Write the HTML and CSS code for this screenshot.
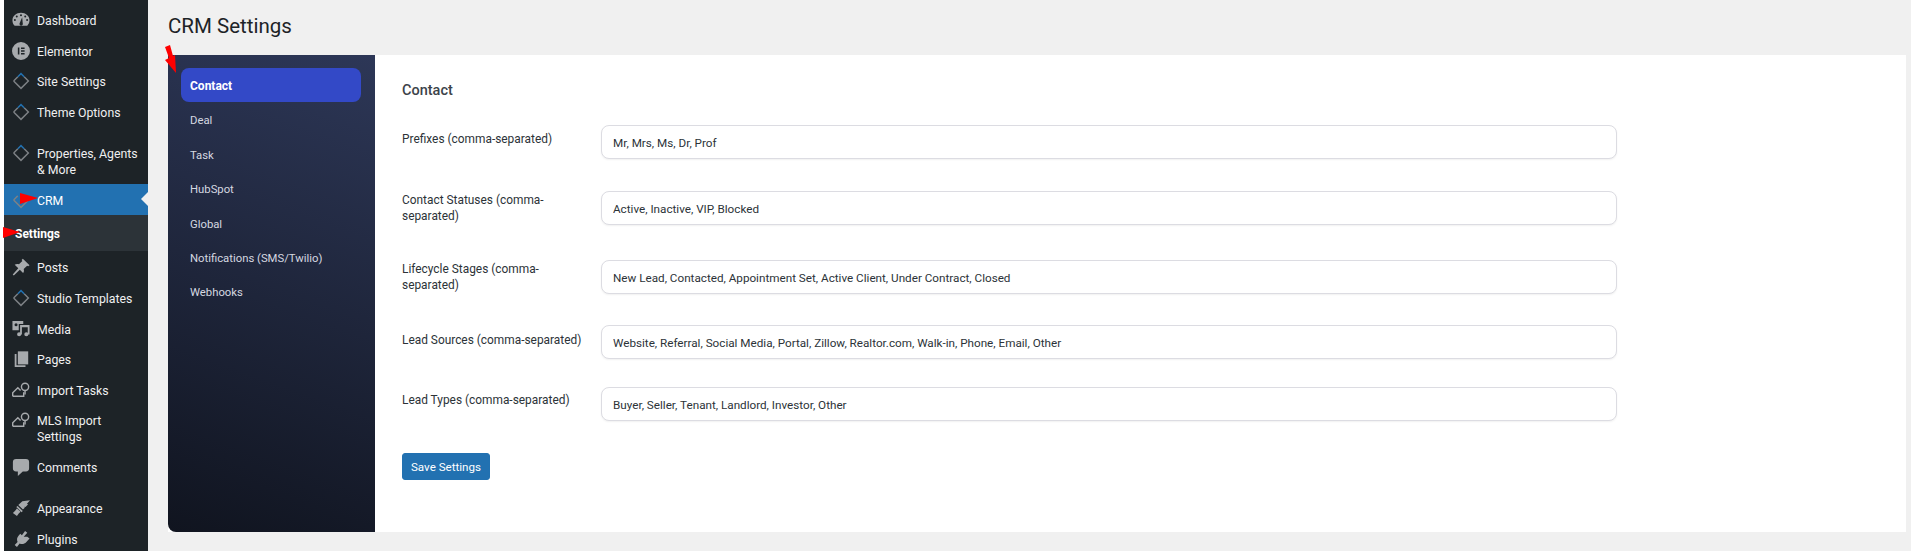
FILE: index.html
```html
<!DOCTYPE html>
<html lang="en">
<head>
<meta charset="utf-8">
<title>CRM Settings</title>
<link rel="stylesheet" href="styles.css">
</head>
<body>
<svg class="defs" width="0" height="0" aria-hidden="true">
  <symbol id="i-dash" viewBox="0 0 20 20"><path fill-rule="evenodd" d="M3 16.500h14A8.600 8.600 0 0 0 19.500 10.500C19.500 5.500 15.200 2 10 2S.5 5.500.5 10.500c0 2.300.9 4.400 2.500 6zM10 3.500a1.100 1.100 0 1 1 0 2.200 1.100 1.100 0 0 1 0-2.200zM5.300 5a1.100 1.100 0 1 1 0 2.200 1.100 1.100 0 0 1 0-2.200zM14.700 5a1.100 1.100 0 1 1 0 2.200 1.100 1.100 0 0 1 0-2.200zM3.200 9a1.100 1.100 0 1 1 0 2.200 1.100 1.100 0 0 1 0-2.200zM16.800 9a1.100 1.100 0 1 1 0 2.200 1.100 1.100 0 0 1 0-2.200zM11.300 7l.6 6.400a1.900 1.900 0 1 1-3.200-.3z"/></symbol>
  <symbol id="i-elementor" viewBox="0 0 20 20"><path fill-rule="evenodd" d="M10 0a10 10 0 1 0 0 20 10 10 0 0 0 0-20zM6.500 6h1.700v8H6.500zM10 6h4v1.700h-4zM10 9.150h4v1.700h-4zM10 12.300h4V14h-4z"/></symbol>
  <symbol id="i-diamond" viewBox="0 0 20 20"><path class="d-low" d="M1.800 10 10 18.200 18.200 10 13.500 5.300M6.500 5.300 1.800 10" fill="none" stroke-width="1.600"/><path class="d-high" d="M6.500 5.300 10 1.800 13.500 5.300" fill="none" stroke-width="1.600"/></symbol>
  <symbol id="i-pin" viewBox="0 0 20 20"><path d="M12 .8 19.500 8l-1.500 1.300-1.200-.8-3.800 3.600c.6 1.700.3 3.300-.7 4.600L8.700 13 2 19.500l-1.200-1.100L7 11.400 3 7.600c1.300-1.100 3-1.300 4.700-.7l3.800-3.700-.8-1.100z"/></symbol>
  <symbol id="i-media" viewBox="0 0 20 20"><path fill-rule="evenodd" d="M.5 1h12v3.500H7.500V11.500H.5zM4.500 3.500a1.700 1.700 0 1 0 0 3.400 1.700 1.700 0 0 0 0-3.400z"/><path fill-rule="evenodd" d="M9 5.500h10.500V16h-2V8h-6.500v8H9z"/><path d="M8 13.500a2.300 2.300 0 1 1-.1 4.600 2.300 2.300 0 0 1 .1-4.600zM16 13.500a2.300 2.300 0 1 1-.1 4.600 2.300 2.300 0 0 1 .1-4.600z"/></symbol>
  <symbol id="i-pages" viewBox="0 0 20 20"><path d="M6.500 1.500h11.500v14.500H6.500z"/><path d="M3 4.500h2v12.500h10V19H3z"/></symbol>
  <symbol id="i-import" viewBox="0 0 20 20"><path fill="none" stroke-width="1.600" d="M.8 17v-4L6.500 7.500 9.500 10.500M.8 17h12.200V12.500"/><circle fill="none" stroke-width="1.600" cx="14.500" cy="6.500" r="4"/><path fill="none" stroke-width="1.600" d="M14.500 10.500V15"/></symbol>
  <symbol id="i-comment" viewBox="0 0 20 20"><path d="M4.500 1h11A3.500 3.500 0 0 1 19 4.500v7a3.500 3.500 0 0 1-3.500 3.500H12l-5.500 5v-5h-2A3.500 3.500 0 0 1 1 11.500v-7A3.500 3.500 0 0 1 4.500 1z"/></symbol>
  <symbol id="i-brush" viewBox="0 0 20 20"><path d="M11.500 2.500 20 1.500 16.500 5.500l1.500.3-3 3-1.200-.3.400 1.100-2 2L7 6.800z"/><path d="M6.200 7.700 12 13.300 10.600 14.700 4.800 9z"/><path d="M5.500 10.500 9.500 14.300 7.500 16 5.500 19 1 15.500 3.500 13z"/></symbol>
  <symbol id="i-plug" viewBox="0 0 20 20"><path d="M14.500 1 17 3 13 7.500h4l2.500 2-3.500 3.800c-2.300 2.500-5.200 2.900-7.500 1.700L5.500 19 3 16.800l3.200-3.600C5.100 10.900 5.400 8.200 7.700 5.800L9.200 4.200l1.800 1.600z"/></symbol>
</svg>

<nav class="sidebar">
  <ul class="menu">
    <li class="menu-item"><svg class="icon"><use href="#i-dash"/></svg><span>Dashboard</span></li>
    <li class="menu-item"><svg class="icon"><use href="#i-elementor"/></svg><span>Elementor</span></li>
    <li class="menu-item"><svg class="icon"><use href="#i-diamond"/></svg><span>Site Settings</span></li>
    <li class="menu-item"><svg class="icon"><use href="#i-diamond"/></svg><span>Theme Options</span></li>
    <li class="menu-item menu-item-sep"><svg class="icon"><use href="#i-diamond"/></svg><span>Properties, Agents &amp; More</span></li>
    <li class="menu-item menu-item-current"><svg class="icon"><use href="#i-diamond"/></svg><span>CRM</span></li>
    <li class="submenu">Settings</li>
    <li class="menu-item"><svg class="icon"><use href="#i-pin"/></svg><span>Posts</span></li>
    <li class="menu-item"><svg class="icon"><use href="#i-diamond"/></svg><span>Studio Templates</span></li>
    <li class="menu-item"><svg class="icon"><use href="#i-media"/></svg><span>Media</span></li>
    <li class="menu-item"><svg class="icon"><use href="#i-pages"/></svg><span>Pages</span></li>
    <li class="menu-item"><svg class="icon"><use href="#i-import"/></svg><span>Import Tasks</span></li>
    <li class="menu-item"><svg class="icon"><use href="#i-import"/></svg><span>MLS Import Settings</span></li>
    <li class="menu-item"><svg class="icon"><use href="#i-comment"/></svg><span>Comments</span></li>
    <li class="menu-item menu-item-sep"><svg class="icon"><use href="#i-brush"/></svg><span>Appearance</span></li>
    <li class="menu-item"><svg class="icon"><use href="#i-plug"/></svg><span>Plugins</span></li>
  </ul>
</nav>

<main class="main">
  <h1 class="page-title">CRM Settings</h1>
  <section class="panel">
    <aside class="tabs">
      <a class="tab tab-active">Contact</a>
      <a class="tab">Deal</a>
      <a class="tab">Task</a>
      <a class="tab">HubSpot</a>
      <a class="tab">Global</a>
      <a class="tab">Notifications (SMS/Twilio)</a>
      <a class="tab">Webhooks</a>
    </aside>
    <form class="content">
      <h2 class="content-title">Contact</h2>
      <div class="field field-a"><label class="field-label">Prefixes (comma-separated)</label><input class="field-input" value="Mr, Mrs, Ms, Dr, Prof"></div>
      <div class="field field-b"><label class="field-label">Contact Statuses (comma-separated)</label><input class="field-input" value="Active, Inactive, VIP, Blocked"></div>
      <div class="field field-c"><label class="field-label">Lifecycle Stages (comma-separated)</label><input class="field-input" value="New Lead, Contacted, Appointment Set, Active Client, Under Contract, Closed"></div>
      <div class="field field-d"><label class="field-label">Lead Sources (comma-separated)</label><input class="field-input" value="Website, Referral, Social Media, Portal, Zillow, Realtor.com, Walk-in, Phone, Email, Other"></div>
      <div class="field field-e"><label class="field-label">Lead Types (comma-separated)</label><input class="field-input" value="Buyer, Seller, Tenant, Landlord, Investor, Other"></div>
      <button class="save" type="button">Save Settings</button>
    </form>
  </section>
</main>

<svg class="annotation" width="1911" height="551" aria-hidden="true">
  <path d="M165 47 170 45 173 56 175 55 176 73 165 60 169 58z"/>
  <path d="M20 193 38 198 20 204z"/>
  <path d="M3 227 20 232 3 238z"/>
</svg>
</body>
</html>
```

FILE: styles.css
```css
* { box-sizing: border-box; }
html, body { margin: 0; height: 100%; }
body {
  display: flex;
  height: 551px;
  overflow: hidden;
  padding-left: 4px;
  background: #fff;
  font-family: Roboto, "Open Sans", sans-serif;
  font-size: 12.3px;
  color: #2c3338;
}
.defs { position: absolute; }

.sidebar { width: 144px; flex: none; background: #1d2327; overflow: hidden; }
.menu { list-style: none; margin: 0; padding: 4.7px 0 0; }
.menu-item {
  display: flex;
  align-items: flex-start;
  gap: 7px;
  padding: 8.3px 8px 6.35px;
  line-height: 16px;
  color: #f0f0f1;
}
.menu-item-sep { margin-top: 10.4px; }
.menu-item-current { background: #2271b1; color: #fff; position: relative; }
.menu-item-current::after {
  content: "";
  position: absolute;
  right: 0;
  top: 8px;
  border: 7px solid transparent;
  border-left-width: 0;
  border-right-color: #f0f0f0;
}
.icon { width: 18px; height: 18px; margin-top: -2px; flex: none; fill: #a7aaad; overflow: visible; }
.icon use { stroke: #a7aaad; stroke-width: 0; }
.d-low { stroke: #7d8185; }
.d-high { stroke: #2271b1; }
.menu-item-current .d-low, .menu-item-current .d-high { stroke: #fff; }
.submenu {
  height: 36px;
  margin-bottom: 1px;
  padding-left: 11px;
  background: #2c3338;
  color: #fff;
  font-weight: 700;
  font-size: 12px;
  line-height: 38px;
}

.main { flex: 1; min-width: 0; background: #f0f0f0; padding: 0 5px 0 20px; }
.page-title {
  margin: 0;
  height: 55px;
  padding-top: 13px;
  font-size: 20.5px;
  font-weight: 400;
  line-height: 26px;
  color: #1d2327;
}
.panel { display: flex; height: 477px; background: #fff; }
.tabs {
  width: 207px;
  flex: none;
  padding: 13px 14px 0 13px;
  display: flex;
  flex-direction: column;
  border-radius: 0 0 0 8px;
  background: linear-gradient(20deg, #10141f, #2d3757);
}
.tab {
  display: block;
  height: 34.4px;
  padding: 3px 9px 0;
  line-height: 31.4px;
  color: #d5d8e0;
  font-size: 11.3px;
}
.tab-active { background: #3349c7; border-radius: 8px; color: #fff; font-weight: 700; font-size: 12px; padding-top: 2px; line-height: 32.4px; }
.content { flex: 1; padding: 26px 0 0 27px; }
.content-title { margin: 0 0 24px; font-size: 14.5px; line-height: 20px; font-weight: 500; color: #3c434a; }
.field { display: flex; align-items: flex-start; }
.field-a { height: 66px; }
.field-b { height: 69px; }
.field-c { height: 65px; }
.field-d { height: 62px; }
.field-e { height: 66px; }
.field-label {
  width: 199px;
  flex: none;
  padding: 0 8px 0 0;
  font-size: 11.9px;
  line-height: 16px;
  font-weight: 400;
  color: #2c3338;
}
.field-b .field-label, .field-c .field-label { padding-right: 40px; padding-top: 1px; }
.field-a .field-label { padding-top: 6px; }
.field-d .field-label { padding-top: 7px; }
.field-e .field-label { padding-top: 5px; }
.field-input {
  width: 1016px;
  height: 34px;
  padding: 2px 11px 0;
  border: 1px solid #dcdce2;
  border-radius: 8px;
  box-shadow: 0 1px 2px rgba(0,0,0,.06);
  background: #fff;
  font: 11.7px Roboto, "Open Sans", sans-serif;
  color: #2c3338;
  outline: 0;
}
.save {
  display: block;
  width: 88px;
  height: 27px;
  padding: 0;
  border: 1px solid #2271b1;
  border-radius: 3px;
  background: #2271b1;
  color: #fff;
  font: 11.6px Roboto, "Open Sans", sans-serif;
}
.annotation { position: absolute; left: 0; top: 0; fill: #ff0000; pointer-events: none; }
```
